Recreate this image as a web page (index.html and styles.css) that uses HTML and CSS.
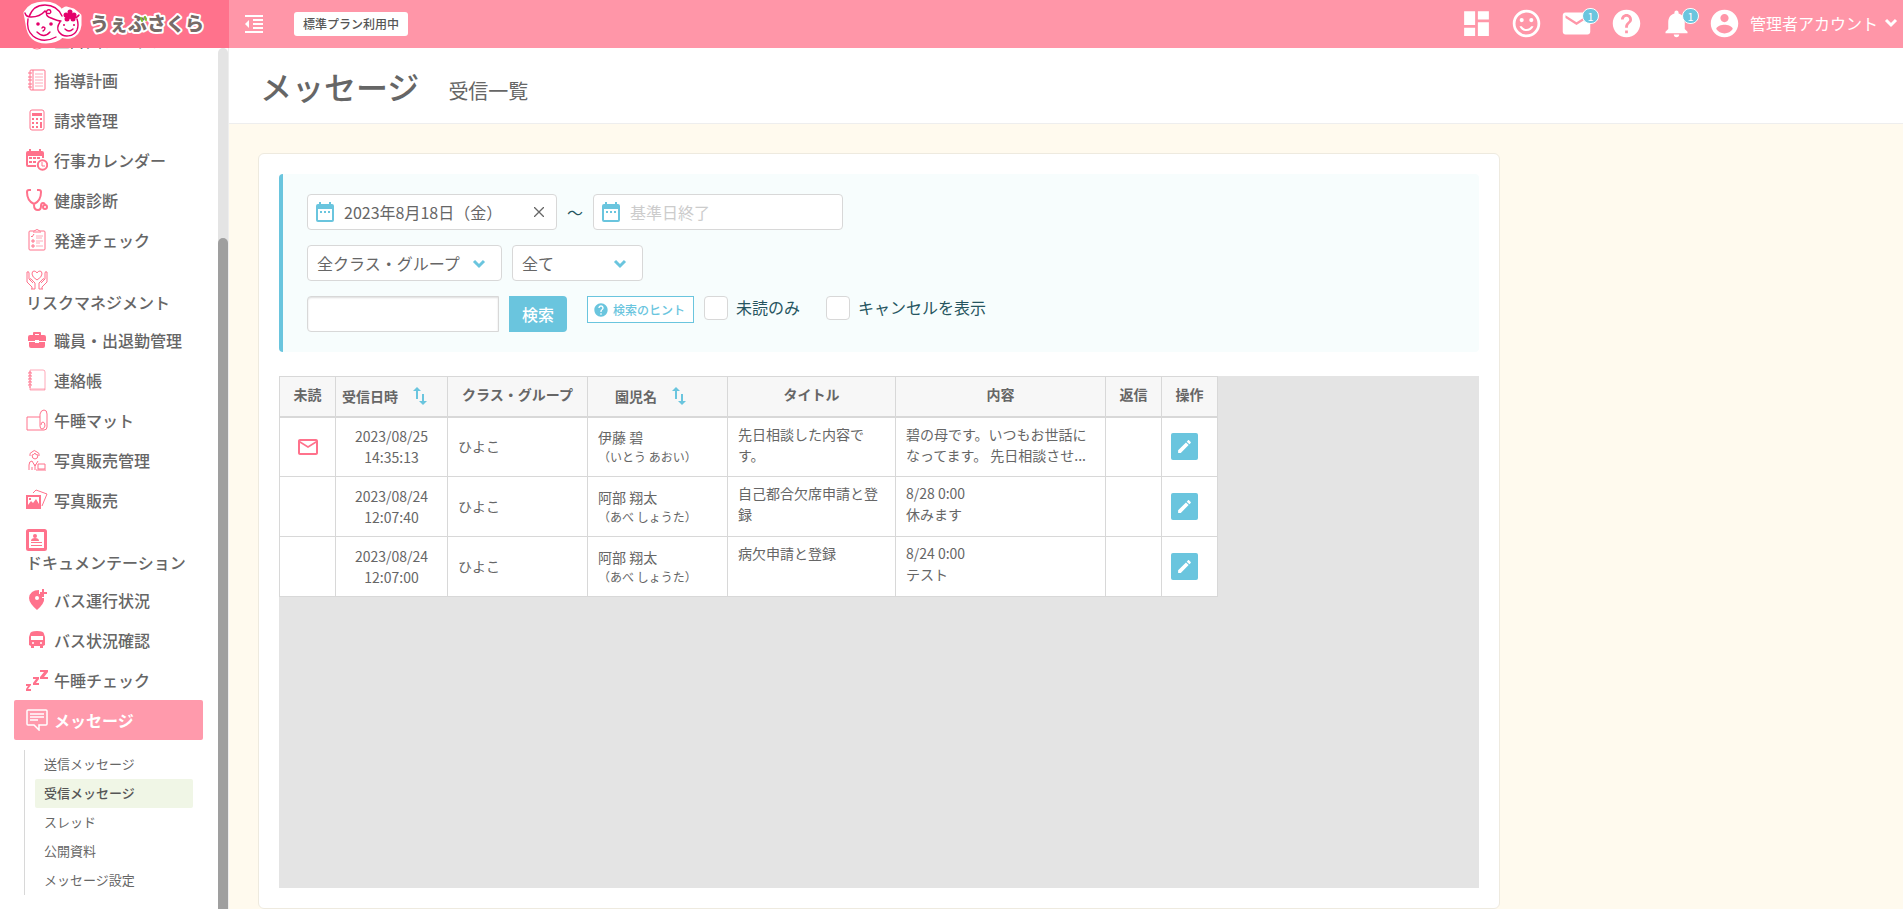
FILE: index.html
```html
<!DOCTYPE html>
<html lang="ja">
<head>
<meta charset="utf-8">
<title>受信一覧 - メッセージ</title>
<link rel="stylesheet" href="styles.css">
</head>
<body>
<svg class="sprite" aria-hidden="true">
  <symbol id="calendar" viewBox="0 0 18 20"><path d="M2 2h1V0h2v2h8V0h2v2h1a2 2 0 0 1 2 2v14a2 2 0 0 1-2 2H2a2 2 0 0 1-2-2V4a2 2 0 0 1 2-2zm0 5v11h14V7zm2 2h2v2H4zm4 0h2v2H8zm4 0h2v2h-2z"/></symbol>
  <symbol id="chevron" viewBox="0 0 14 10"><path d="M2 2l5 5 5-5" fill="none" stroke="currentColor" stroke-width="3"/></symbol>
  <symbol id="help" viewBox="0 0 24 24"><path d="M12 2C6.48 2 2 6.48 2 12s4.48 10 10 10 10-4.48 10-10S17.52 2 12 2zm1 17h-2v-2h2v2zm2.07-7.75l-.9.92C13.45 12.9 13 13.5 13 15h-2v-.5c0-1.1.45-2.1 1.17-2.83l1.24-1.26c.37-.36.59-.86.59-1.41 0-1.1-.9-2-2-2s-2 .9-2 2H8c0-2.21 1.79-4 4-4s4 1.79 4 4c0 .88-.36 1.68-.93 2.25z"/></symbol>
  <symbol id="edit" viewBox="0 0 24 24"><path d="M3 17.25V21h3.75L17.81 9.94l-3.75-3.75L3 17.25zM20.71 7.04c.39-.39.39-1.02 0-1.41l-2.34-2.34c-.39-.39-1.02-.39-1.41 0l-1.83 1.83 3.75 3.75 1.83-1.83z"/></symbol>
  <symbol id="sort" viewBox="0 0 14 18"><path d="M4 0l4 4H5v8H3V4H0zM9 7h2v7h3l-4 4-4-4h3z"/></symbol>
</svg>

<header class="topbar">
  <a class="logo" href="#">
    <svg viewBox="0 0 229 48" role="img" aria-label="うぇぶさくら">
      <g fill="#fff" stroke="#fff" stroke-width="5" stroke-linejoin="round"><path d="M26 13q5-9 18-9 12 0 17 8l5-3 7 2 6 5v9q-1 9-9 11-5 1-8-1-6 6-16 6-16 0-18-17l-1-6z"/></g>
      <g fill="none" stroke="#e4006b" stroke-width="1.400" stroke-linecap="round">
        <path d="M25 13q1 4 6 4 9 0 14-6c2 4 8 3 5-1-4-2-6 6 1 8 5 2 7 3 10 3M29 17q4-12 16-12t17 11M28 19q-2 11 5 17 10 8 23 1M60 22q-4 6-1 10c4 6 15 5 18-2q2-5 0-11M73 18q4 0 6-3"/>
        <path d="M42 28q1-2 3 0 0 2-2 3M37 32q7 7 13 0M65 29q4 4 8 0"/>
      </g>
      <g fill="#e4006b"><circle cx="38" cy="24" r="1.800"/><circle cx="51" cy="24" r="1.800"/><circle cx="64" cy="25" r="1"/><circle cx="74" cy="25" r="1"/><circle cx="70" cy="12" r="2.500"/><circle cx="66" cy="15" r="2.500"/><circle cx="67" cy="19" r="2.500"/><circle cx="73" cy="19" r="2.500"/><circle cx="74" cy="15" r="2.500"/><circle cx="70" cy="16" r="3"/></g>
      <text class="logo-text" x="90" y="31">うぇぶさくら</text>
      <path d="M141 18l1 3M145 17l1 3" stroke="#7fbe26" stroke-width="2" stroke-linecap="round"/>
    </svg>
  </a>
  <button class="icon-button collapse" aria-label="メニューを閉じる"><svg viewBox="0 0 18 18" width="18" height="18"><path d="M0 0h18v2H0zM8 4h10v2H8zM8 8h10v2H8zM8 12h10v2H8zM0 16h18v2H0zM4 5v8L0 9z"/></svg></button>
  <span class="plan">標準プラン利用中</span>
  <nav class="tools">
    <a href="#" aria-label="ダッシュボード"><svg viewBox="0 0 24 24"><path d="M3 13h8V3H3v10zm0 8h8v-6H3v6zm10 0h8V11h-8v10zm0-18v6h8V3h-8z"/></svg></a>
    <a href="#" aria-label="スマイル"><svg viewBox="0 0 24 24"><path d="M12 2a10 10 0 1 0 0 20 10 10 0 0 0 0-20zm0 18a8 8 0 1 1 0-16 8 8 0 0 1 0 16z"/><circle cx="8.500" cy="9.500" r="1.500"/><circle cx="15.500" cy="9.500" r="1.500"/><path d="M12 16c-1.480 0-2.750-.81-3.450-2H6.880a5.500 5.500 0 0 0 10.240 0h-1.670c-.69 1.190-1.970 2-3.450 2z"/></svg></a>
    <a href="#" aria-label="メール"><svg viewBox="0 0 24 24"><path d="M20 4H4c-1.100 0-2 .9-2 2v12c0 1.100.9 2 2 2h16c1.100 0 2-.9 2-2V6c0-1.100-.9-2-2-2zm0 4l-8 5-8-5V6l8 5 8-5v2z"/></svg><span class="count">1</span></a>
    <a href="#" aria-label="ヘルプ"><svg><use href="#help"/></svg></a>
    <a href="#" aria-label="お知らせ"><svg viewBox="0 0 24 24"><path d="M12 22c1.100 0 2-.9 2-2h-4c0 1.100.89 2 2 2zm6-6v-5c0-3.070-1.640-5.640-4.500-6.320V4c0-.83-.67-1.500-1.500-1.500s-1.500.67-1.500 1.500v.68C7.630 5.360 6 7.920 6 11v5l-2 2v1h16v-1l-2-2z"/></svg><span class="count">1</span></a>
    <button class="account"><svg class="avatar" viewBox="0 0 24 24"><path d="M12 2C6.480 2 2 6.480 2 12s4.480 10 10 10 10-4.480 10-10S17.520 2 12 2zm0 3c1.660 0 3 1.340 3 3s-1.340 3-3 3-3-1.340-3-3 1.340-3 3-3zm0 14.200c-2.500 0-4.710-1.280-6-3.220.03-1.990 4-3.080 6-3.080 1.990 0 5.970 1.090 6 3.080-1.290 1.940-3.500 3.220-6 3.220z"/></svg><span>管理者アカウント</span><svg class="chevron"><use href="#chevron"/></svg></button>
  </nav>
</header>

<div class="shell">
  <aside class="sidebar">
    <nav class="menu">
      <ul class="menu-list">
        <li><a href="#"><svg viewBox="0 0 22 22"><circle class="line" cx="11" cy="11" r="9"/><circle class="line" cx="11" cy="11" r="4"/></svg>登降園チェック</a></li>
        <li><a href="#"><svg viewBox="0 0 22 22"><path class="line" d="M5 1h13q1 0 1 1v18q0 1-1 1H5q-1 0-1-1V2q0-1 1-1zM2 4h4M2 8h4M2 11h4M2 15h4M2 18h4M7 1v20"/><path class="thin" d="M9 5h8M9 8h8M9 11h8M9 14h8M9 17h8"/></svg>指導計画</a></li>
        <li><a href="#"><svg viewBox="0 0 22 22"><rect class="line" x="4" y="1" width="14" height="20" rx="2"/><path d="M6 4h10v3H6zM6 9h2v2H6zM10 9h2v2h-2zM14 9h2v2h-2zM6 13h2v2H6zM10 13h2v2h-2zM14 13h2v6h-2zM6 17h2v2H6zM10 17h2v2h-2z"/></svg>請求管理</a></li>
        <li><a href="#"><svg viewBox="0 0 22 22"><path d="M0 4q0-2 2-2h1V0h2v2h8V0h2v2h1q2 0 2 2v3H0zM0 7h2v9h8v2H2q-2 0-2-2zM16 7h2v2h-2zM3 8h3v2H3zM7 8h3v2H7zM11 8h3v2h-3zM3 12h3v2H3zM7 12h3v2H7z"/><circle class="bold" cx="16.500" cy="16" r="4.700"/><path class="line" d="M16 13v4h3"/></svg>行事カレンダー</a></li>
        <li><a href="#"><svg viewBox="0 0 22 22"><path class="bold" d="M5 1H3Q1 1 1 3q0 9 7 12 7-3 7-12 0-2-2-2h-2M8 15v1q0 5 4 5 3 0 3-4 0-3 2-3t2 3"/><circle class="bold" cx="19" cy="18" r="2"/></svg>健康診断</a></li>
        <li><a href="#"><svg viewBox="0 0 22 22"><path class="line" d="M8 2H4Q3 2 3 3v17q0 1 1 1h14q1 0 1-1V3q0-1-1-1h-4M7 3h8M8 2q3-3 6 0M5 7l1 1 2-3M6 11h2v2H6zM6 16h2v2H6z"/><path class="thin" d="M10 7h7M10 9h6M10 12h7M10 14h4M10 17h7"/></svg>発達チェック</a></li>
        <li><a href="#"><svg viewBox="0 0 22 22"><path class="line" d="M11 11Q6 8 6 5t2-3q2 0 3 2 1-2 3-2 2 0 2 3t-5 6zM1 3v10l5 5v2M3 10l4 4M4 10q1-1 2 1l3 3v6M1 3q2-1 2 1v6M21 3v10l-5 5v2M19 10l-4 4M18 10q-1-1-2 1l-3 3v6M21 3q-2-1-2 1v6M5 20h4M13 20h4"/></svg>リスクマネジメント</a></li>
        <li><a href="#"><svg viewBox="0 0 22 22"><path fill-rule="evenodd" d="M7 6V4q0-1 1-1h6q1 0 1 1v2h3q2 0 2 2v4h-7v-1H9v1H2V8q0-2 2-2zM9 6h4V5H9zM3 13h6v1h4v-1h6v4q0 2-2 2H5q-2 0-2-2z"/></svg>職員・出退勤管理</a></li>
        <li><a href="#"><svg viewBox="0 0 22 22"><path class="thin" d="M4 1h13q2 0 2 2v18H4z"/><path class="line" stroke-dasharray="2 1" d="M4 2v18"/><path class="line" d="M2 4h4M2 7h4M2 10h4M2 13h4M2 16h4"/><path class="thin" d="M4 20h15"/></svg>連絡帳</a></li>
        <li><a href="#"><svg viewBox="0 0 22 22"><path class="line" d="M14 8H1v13h17q3 0 3-3V5q0-4-3-4t-4 4v12q0 3 2 3t3-3q0-4-2-4t-2 3"/></svg>午睡マット</a></li>
        <li><a href="#"><svg viewBox="0 0 22 22"><path class="line" d="M4 7q-1-3 2-4 2-3 5 0 3 1 2 4M6 6q0 4 3 4t3-4q-3 0-3-2-1 2-3 2zM3 21v-5q0-4 3-4l3 5 3-5M9 21v-6M6 18v3M12 15h7v5h-7zM10 21h10"/></svg>写真販売管理</a></li>
        <li><a href="#"><svg viewBox="0 0 22 22"><path fill-rule="evenodd" d="M0 6h15v14H0zM2 8v8l3-4 2 2 3-4 3 5V8zM3 9h2v2H3z"/><path class="line" d="M7 4l3-3 11 4-5 12"/></svg>写真販売</a></li>
        <li><a href="#"><svg viewBox="0 0 22 22"><rect x="1.500" y="1.500" width="18" height="19" rx="1" fill="none" stroke="currentColor" stroke-width="3"/><circle cx="9" cy="7" r="2"/><path d="M5 12q0-3 4-3t4 3zM5 13h11v1H5zM5 16h11v1H5z"/></svg>ドキュメンテーション</a></li>
        <li><a href="#"><svg viewBox="0 0 22 22"><path fill-rule="evenodd" d="M13 1v4h3v4h2q1 5-7 12Q3 14 3 9q1-8 10-8zm-2 6a2 2 0 1 0 0 4 2 2 0 0 0 0-4z"/><path d="M16 0h2v3h3v2h-3v3h-2V5h-2V3h2z"/></svg>バス運行状況</a></li>
        <li><a href="#"><svg viewBox="0 0 22 22"><path fill-rule="evenodd" d="M4 5q0-3 7-3t7 3l1 3v8l-2 1v2h-3v-2H8v2H5v-2l-2-1V8zm1 2v4h12V7zm2 6a1 1 0 1 0 0 2 1 1 0 0 0 0-2zm8 0a1 1 0 1 0 0 2 1 1 0 0 0 0-2z"/></svg>バス状況確認</a></li>
        <li><a href="#"><svg viewBox="0 0 22 22"><path d="M14 1h8v2l-4 5h4v2h-8V8l4-5h-4zM7 8h6v2l-3 4h3v2H7v-2l3-4H7zM0 15h5v1l-3 4h3v2H0v-2l2-3H0z"/></svg>午睡チェック</a></li>
        <li><a class="current" href="#"><svg viewBox="0 0 22 22"><path class="bold" d="M2 1h18q1 0 1 1v13q0 1-1 1h-7v5l-5-5H2q-1 0-1-1V2q0-1 1-1z"/><path class="bold" d="M4 5h14M4 8h14M4 11h8"/></svg>メッセージ</a>
          <ul class="submenu">
            <li><a href="#">送信メッセージ</a></li>
            <li><a class="selected" href="#">受信メッセージ</a></li>
            <li><a href="#">スレッド</a></li>
            <li><a href="#">公開資料</a></li>
            <li><a href="#">メッセージ設定</a></li>
          </ul>
        </li>
      </ul>
    </nav>
    <div class="scroll-track"><div class="scroll-thumb"></div></div>
  </aside>

  <main class="main">
    <div class="page-head"><h1>メッセージ</h1><h2>受信一覧</h2></div>
    <div class="content">
      <section class="card">
        <form class="filter">
          <div class="filter-row">
            <label class="date"><svg><use href="#calendar"/></svg><input type="text" value="2023年8月18日（金）" aria-label="基準日開始"><button type="button" class="clear" aria-label="クリア"><svg viewBox="0 0 10 10"><path d="M0 0l10 10M10 0L0 10" stroke="currentColor" stroke-width="1.300"/></svg></button></label>
            <span class="tilde">～</span>
            <label class="date"><svg><use href="#calendar"/></svg><input type="text" placeholder="基準日終了" aria-label="基準日終了"></label>
          </div>
          <div class="filter-row">
            <label class="select group"><select aria-label="クラス・グループ"><option>全クラス・グループ</option></select><svg class="chevron"><use href="#chevron"/></svg></label>
            <label class="select kind"><select aria-label="種別"><option>全て</option></select><svg class="chevron"><use href="#chevron"/></svg></label>
          </div>
          <div class="filter-row">
            <input class="keyword" type="text" aria-label="キーワード">
            <button type="button" class="search">検索</button>
            <button type="button" class="hint"><svg><use href="#help"/></svg>検索のヒント</button>
            <label class="check"><input type="checkbox">未読のみ</label>
            <label class="check"><input type="checkbox">キャンセルを表示</label>
          </div>
        </form>
        <div class="table-area">
          <table>
            <colgroup><col class="w-small"><col class="w-date"><col class="w-name"><col class="w-name"><col class="w-title"><col class="w-body"><col class="w-small"><col class="w-small"></colgroup>
            <thead><tr>
              <th>未読</th>
              <th class="sortable"><button>受信日時<svg><use href="#sort"/></svg></button></th>
              <th>クラス・グループ</th>
              <th class="sortable"><button>園児名<svg><use href="#sort"/></svg></button></th>
              <th>タイトル</th><th>内容</th><th>返信</th><th>操作</th>
            </tr></thead>
            <tbody>
              <tr><td class="center"><svg class="unread" viewBox="2 4 20 16" role="img" aria-label="未読"><path d="M20 4H4c-1.100 0-2 .9-2 2v12c0 1.100.9 2 2 2h16c1.100 0 2-.9 2-2V6c0-1.100-.9-2-2-2zm0 14H4V8l8 5 8-5v10zm-8-7L4 6h16l-8 5z"/></svg></td><td class="center">2023/08/25<br>14:35:13</td><td>ひよこ</td><td>伊藤 碧<small>（いとう あおい）</small></td><td class="top">先日相談した内容です。</td><td class="top">碧の母です。いつもお世話になってます。 先日相談させ...</td><td></td><td class="action"><button class="edit" aria-label="編集"><svg><use href="#edit"/></svg></button></td></tr>
              <tr><td></td><td class="center">2023/08/24<br>12:07:40</td><td>ひよこ</td><td>阿部 翔太<small>（あべ しょうた）</small></td><td class="top">自己都合欠席申請と登録</td><td class="top">8/28 0:00<br>休みます</td><td></td><td class="action"><button class="edit" aria-label="編集"><svg><use href="#edit"/></svg></button></td></tr>
              <tr><td></td><td class="center">2023/08/24<br>12:07:00</td><td>ひよこ</td><td>阿部 翔太<small>（あべ しょうた）</small></td><td class="top">病欠申請と登録</td><td class="top">8/24 0:00<br>テスト</td><td></td><td class="action"><button class="edit" aria-label="編集"><svg><use href="#edit"/></svg></button></td></tr>
            </tbody>
          </table>
        </div>
      </section>
    </div>
  </main>
</div>
</body>
</html>
```
FILE: styles.css
```css
* { box-sizing: border-box; }

body {
  margin: 0;
  height: 100vh;
  display: flex;
  flex-direction: column;
  overflow: hidden;
  font: 16px/24px "Noto Sans CJK JP", sans-serif;
  color: #666;
  background: #fffaee;
}

a { color: inherit; text-decoration: none; }
ul { list-style: none; margin: 0; padding: 0; }
button, input, select { font: inherit; color: inherit; }
button { border: 0; padding: 0; background: none; cursor: pointer; }
svg { fill: currentColor; flex: none; display: block; }
.sprite { position: absolute; width: 0; height: 0; }

/* top bar */
.topbar { display: flex; align-items: center; height: 48px; flex: none; background: #ff96a8; color: #fff; }
.logo { width: 229px; height: 48px; background: #ff728c; margin-right: 16px; }
.logo-text { font-size: 19px; font-weight: 900; fill: #776b68; stroke: #fff; stroke-width: 4px; stroke-linejoin: round; paint-order: stroke; }
.plan { margin-left: 31px; padding: 0 9px; border-radius: 3px; background: #fff; color: #555; font-size: 12px; font-weight: 500; }
.tools { display: flex; align-items: center; gap: 17px; height: 46px; margin: 0 0 auto auto; padding-right: 5px; }
.tools a { position: relative; }
.tools a svg, .avatar { width: 33px; height: 33px; }
.count {
  position: absolute; right: -6px; top: 1px;
  width: 17px; height: 16px; border: 1px solid #fff; border-radius: 8px;
  background: #6ac5de; font-size: 11px; line-height: 14px; text-align: center;
}
.account { display: flex; align-items: center; margin-left: -2px; }
.account span { margin: 0 6px 0 9px; }
.chevron { width: 14px; height: 10px; }

/* sidebar */
.shell { display: flex; flex: 1; min-height: 0; }
.sidebar { display: flex; width: 229px; flex: none; overflow: hidden; background: #fff; border-right: 1px solid #eee; }
.menu { flex: 1; padding: 0 15px 0 14px; }
.menu-list { margin-top: -28px; }
.menu-list > li > a {
  display: flex; flex-wrap: wrap; align-content: flex-start; column-gap: 6px;
  min-height: 40px; padding: 9px 12px 7px; line-height: 22px; font-weight: 500; color: #666;
}
.menu-list svg { width: 22px; height: 22px; color: #ff728c; }
.menu-list .line, .menu-list .thin, .menu-list .bold { fill: none; stroke: currentColor; stroke-width: 1; }
.menu-list .thin { stroke-opacity: .6; }
.menu-list .bold { stroke-width: 2; }
.menu-list > li > .current { background: #ff9aac; color: #fff; font-weight: 700; border-radius: 2px; }
.menu-list .current svg { color: #fff; }
.menu-list .current .bold { stroke-width: 1.5; }
.submenu { margin: 10px 10px 0; border-left: 1px solid #d8d8d8; padding-left: 10px; font-size: 13px; }
.submenu a { display: block; height: 29px; padding-left: 9px; line-height: 28px; border-radius: 2px; }
.submenu .selected { background: #f0f6e6; font-weight: 500; color: #555; }
.scroll-track { width: 10px; border-radius: 5px 5px 0 0; background: #e4e4e4; padding-top: 190px; }
.scroll-thumb { height: 100%; border-radius: 5px 5px 0 0; background: #9f9f9f; }

/* page */
.main { flex: 1; min-width: 0; display: flex; flex-direction: column; }
.page-head { display: flex; align-items: center; gap: 29px; height: 76px; padding-left: 31px; background: #fff; border-bottom: 1px solid #eee; }
.page-head h1 { margin: 0; font-size: 32px; line-height: 40px; font-weight: 500; }
.page-head h2 { margin: 10px 0 0; font-size: 20px; line-height: 30px; font-weight: 400; }
.content { flex: 1; min-height: 0; display: flex; padding: 29px 30px 0 29px; }
.card {
  flex: 1; max-width: 1242px; display: flex; flex-direction: column; gap: 24px;
  padding: 20px; border: 1px solid #eeeadf; border-radius: 6px; background: #fff;
}

/* filter */
.filter { display: flex; flex-direction: column; gap: 15px; padding: 20px 24px; border-left: 4px solid #6ac5de; border-radius: 4px; background: #f7fdfd; color: #265560; }
.filter-row { display: flex; align-items: flex-start; gap: 10px; }
.date, .select, .keyword { height: 36px; border: 1px solid #d8d8d8; border-radius: 4px; background: #fff; color: #666; }
.date { display: flex; align-items: center; width: 250px; padding: 0 12px 0 8px; }
.date > svg { width: 18px; height: 20px; color: #6ac5de; }
.date input { flex: 1; min-width: 0; height: 34px; border: 0; padding: 0 0 0 10px; background: none; outline: 0; }
.date input::placeholder { color: #ccc; }
.clear svg { width: 10px; height: 10px; }
.tilde { line-height: 36px; }
.select { position: relative; }
.select select { width: 100%; height: 34px; padding: 0 9px; border: 0; background: none; appearance: none; outline: 0; }
.select .chevron { position: absolute; right: 15px; top: 13px; color: #6ac5de; pointer-events: none; }
.group { width: 195px; }
.kind { width: 131px; }
.keyword { width: 192px; padding: 0 10px; border-radius: 4px 0 0 4px; box-shadow: inset 0 1px 2px #ddd; }
.search { width: 58px; height: 36px; border-radius: 0 4px 4px 0; background: #6ac5de; color: #fff; font-weight: 500; }
.hint { display: flex; align-items: center; gap: 4px; height: 27px; margin-left: 10px; padding: 0 8px 0 5px; border: 1px solid #6ac5de; background: #fff; color: #6ac5de; font-size: 12px; font-weight: 500; }
.hint svg { width: 16px; height: 16px; }
.check { display: flex; gap: 8px; height: 24px; margin-right: 16px; line-height: 22px; }
.check input { width: 24px; height: 24px; margin: 0; appearance: none; border: 1px solid #d8d8d8; border-radius: 4px; background: #fff; }

/* table */
.table-area { flex: 1; min-height: 0; overflow: hidden; background: #e4e4e4; }
table { table-layout: fixed; width: 939px; border-collapse: collapse; font-size: 14px; line-height: 21px; background: #fff; }
.w-small { width: 56px; }
.w-date { width: 112px; }
.w-name { width: 140px; }
.w-title { width: 168px; }
.w-body { width: 210px; }
th, td { border: 1px solid #d8d8d8; }
th { height: 40px; padding: 0 4px 4px; background: #f7f7f7; border-bottom-width: 2px; font-weight: 700; }
.sortable { padding: 0 18px 0 4px; }
.sortable button { display: flex; align-items: center; justify-content: center; gap: 15px; width: 100%; line-height: 20px; font-weight: 700; white-space: nowrap; }
.sortable svg { width: 14px; height: 18px; color: #6ac5de; }
td { height: 60px; padding: 0 10px; }
.center { text-align: center; }
.top { vertical-align: top; padding-top: 6px; }
td small { display: block; font-size: 12px; line-height: 18px; }
.unread { width: 20px; height: 16px; margin: auto; color: #ff728c; }
.action { padding: 0 9px; }
.edit { display: grid; place-items: center; width: 27px; height: 27px; border-radius: 2px; background: #6ac5de; color: #fff; }
.edit svg { width: 17px; height: 17px; }
```
